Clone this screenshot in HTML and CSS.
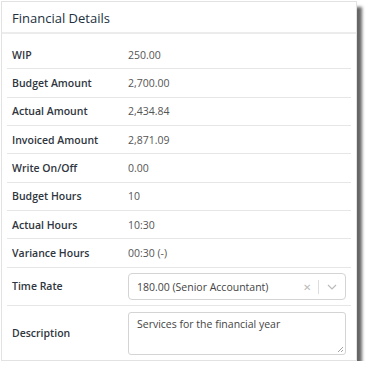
FILE: index.html
```html
<!DOCTYPE html>
<html>
<head>
<meta charset="utf-8">
<link rel="stylesheet" href="styles.css">
</head>
<body>
<div class="panel">
  <div class="panel-head">Financial Details</div>
  <div class="panel-body">
    <div class="row"><div class="label">WIP</div><div class="value">250.00</div></div>
    <div class="row"><div class="label">Budget Amount</div><div class="value">2,700.00</div></div>
    <div class="row"><div class="label">Actual Amount</div><div class="value">2,434.84</div></div>
    <div class="row"><div class="label">Invoiced Amount</div><div class="value">2,871.09</div></div>
    <div class="row"><div class="label">Write On/Off</div><div class="value">0.00</div></div>
    <div class="row"><div class="label">Budget Hours</div><div class="value">10</div></div>
    <div class="row"><div class="label">Actual Hours</div><div class="value">10:30</div></div>
    <div class="row"><div class="label">Variance Hours</div><div class="value">00:30 (-)</div></div>
    <div class="row row-select">
      <div class="label">Time Rate</div>
      <div class="select">
        <span class="select-text">180.00 (Senior Accountant)</span>
        <span class="select-clear">&#x2715;</span>
        <span class="select-sep"></span>
        <svg class="select-arrow" width="10" height="6" viewBox="0 0 10 6"><path d="M1 1 L5 5 L9 1" fill="none" stroke="#bbb" stroke-width="1.2"/></svg>
      </div>
    </div>
    <div class="row row-desc">
      <div class="label">Description</div>
      <div class="textarea">Services for the financial year
        <svg class="grip" width="7" height="7" viewBox="0 0 7 7"><path d="M6 1 L1 6 M6 4 L4 6" stroke="#999" stroke-width="0.9"/></svg>
      </div>
    </div>
  </div>
</div>
</body>
</html>
```

FILE: styles.css
```css
html, body {
  margin: 0;
  padding: 0;
  background: #fff;
}
body {
  padding: 1px 0 0 1px;
  font-family: "Open Sans", "Noto Sans", sans-serif;
  color: #333;
}
.panel {
  width: 354px;
  height: 358px;
  border: 1px solid #e2e2e2;
  background: #fff;
  box-shadow: 5px 6px 3px rgba(0, 0, 0, 0.6);
}
.panel-head {
  height: 32px;
  box-sizing: border-box;
  padding: 7px 0 0 10px;
  font-size: 13px;
  color: #22303e;
  border-bottom: 2px solid #ececec;
}
.panel-body {
  padding: 7px 5px 0 5px;
}
.row {
  display: flex;
  align-items: center;
  height: 28.33px;
  box-sizing: border-box;
  border-bottom: 1px solid #e6e6e6;
  font-size: 10.5px;
}
.label {
  width: 116px;
  padding-left: 5px;
  font-weight: 600;
  color: #2f3640;
  flex: none;
}
.value {
  color: #555;
}
.row-select {
  height: 38px;
}
.row-desc {
  height: 56px;
}
.select {
  flex: 1;
  height: 27px;
  box-sizing: border-box;
  border: 1px solid #d4d4d4;
  border-radius: 4px;
  display: flex;
  align-items: center;
  padding-left: 8px;
  color: #444;
  margin-right: 5px;
  margin-top: 1px;
}
.select-text {
  flex: 1;
}
.select-clear {
  color: #bbb;
  font-size: 10px;
  margin-right: 7px;
}
.select-sep {
  width: 1px;
  height: 14px;
  background: #ddd;
  margin-right: 8px;
}
.select-arrow {
  margin-right: 8px;
}
.textarea {
  flex: 1;
  position: relative;
  height: 43px;
  box-sizing: border-box;
  border: 1px solid #d4d4d4;
  border-radius: 3px;
  padding: 4px 8px;
  color: #444;
  margin-right: 5px;
  margin-top: 1px;
}
.grip {
  position: absolute;
  right: 1px;
  bottom: 1px;
}
```
